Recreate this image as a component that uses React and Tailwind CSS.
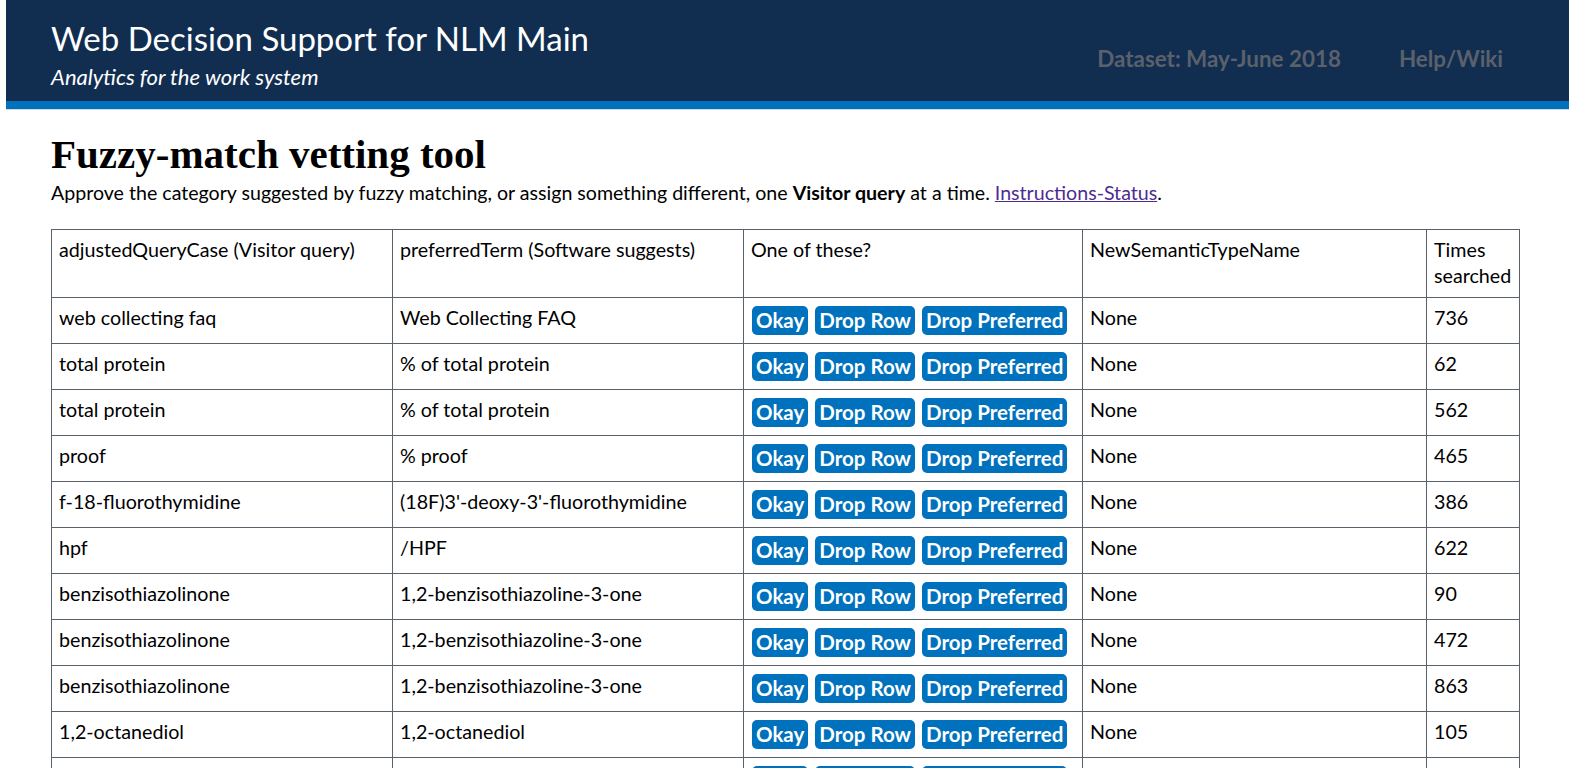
import React from 'react';

const rows = [
  ['web collecting faq', 'Web Collecting FAQ', 'None', '736'],
  ['total protein', '% of total protein', 'None', '62'],
  ['total protein', '% of total protein', 'None', '562'],
  ['proof', '% proof', 'None', '465'],
  ['f-18-fluorothymidine', "(18F)3'-deoxy-3'-fluorothymidine", 'None', '386'],
  ['hpf', '/HPF', 'None', '622'],
  ['benzisothiazolinone', '1,2-benzisothiazoline-3-one', 'None', '90'],
  ['benzisothiazolinone', '1,2-benzisothiazoline-3-one', 'None', '472'],
  ['benzisothiazolinone', '1,2-benzisothiazoline-3-one', 'None', '863'],
  ['1,2-octanediol', '1,2-octanediol', 'None', '105'],
  ['1,2-propanediol', '1,2-propanediol', 'None', '214'],
  ['amino acids', '20 amino acids', 'None', '318'],
];

const Btn = ({ children }) => (
  <button className="bg-[#0071bc] text-white font-bold rounded-[5px] h-[29px] px-[4px] text-[20.5px] leading-[29px]">
    {children}
  </button>
);

export default function App() {
  return (
    <div className="bg-white text-[#000] min-h-screen" style={{ fontFamily: 'Lato, "Noto Sans", sans-serif' }}>
      <header className="ml-[6px]">
        <div className="bg-[#112e51] h-[101px] flex items-start justify-between pl-[45px] pr-[66px]">
          <div className="pt-[16px]">
            <div className="text-white text-[33px] leading-[44px]">Web Decision Support for NLM Main</div>
            <div className="text-white italic text-[22px] leading-[26px] mt-[4px]">Analytics for the work system</div>
          </div>
          <div className="flex gap-[58px] pt-[45px] text-[22.4px] font-bold text-[#5b616b] leading-[28px]">
            <span>Dataset: May-June 2018</span>
            <span>Help/Wiki</span>
          </div>
        </div>
        <div className="bg-[#0071bc] h-[9px] border-b border-[#d6d7d9]"></div>
      </header>

      <main className="pl-[51px] pr-[49px] pt-[22px]">
        <h1 className="text-[41px] leading-[44px] font-bold text-[#000]" style={{ fontFamily: '"Liberation Serif", serif' }}>
          Fuzzy-match vetting tool
        </h1>
        <p className="text-[19.6px] leading-[28px] mt-[3px]">
          Approve the category suggested by fuzzy matching, or assign something different, one <b>Visitor query</b> at a time.{' '}
          <a href="#" className="text-[#4c2c92] underline">Instructions-Status</a>.
        </p>

        <table className="mt-[22px] w-[1469px] border-collapse text-[19.7px] leading-[26px]">
          <thead>
            <tr className="align-top text-left">
              <th className="font-normal border border-[#5b616b] px-[7px] pt-[7px] pb-[7px] w-[341px]">adjustedQueryCase (Visitor query)</th>
              <th className="font-normal border border-[#5b616b] px-[7px] pt-[7px] pb-[7px] w-[351px]">preferredTerm (Software suggests)</th>
              <th className="font-normal border border-[#5b616b] px-[7px] pt-[7px] pb-[7px] w-[339px]">One of these?</th>
              <th className="font-normal border border-[#5b616b] px-[7px] pt-[7px] pb-[7px] w-[344px]">NewSemanticTypeName</th>
              <th className="font-normal border border-[#5b616b] px-[7px] pt-[7px] pb-[8px]">Times<br />searched</th>
            </tr>
          </thead>
          <tbody>
            {rows.map((r, i) => (
              <tr key={i} className="align-top">
                <td className="border border-[#5b616b] px-[7px] pt-[7px] pb-[8px]">{r[0]}</td>
                <td className="border border-[#5b616b] px-[7px] pt-[7px] pb-[8px]">{r[1]}</td>
                <td className="border border-[#5b616b] px-[8px] pt-[8px] pb-[8px]">
                  <div className="flex gap-[7px]">
                    <Btn>Okay</Btn>
                    <Btn>Drop Row</Btn>
                    <Btn>Drop Preferred</Btn>
                  </div>
                </td>
                <td className="border border-[#5b616b] px-[7px] pt-[7px] pb-[8px]">{r[2]}</td>
                <td className="border border-[#5b616b] px-[7px] pt-[7px] pb-[8px]">{r[3]}</td>
              </tr>
            ))}
          </tbody>
        </table>
      </main>
    </div>
  );
}
